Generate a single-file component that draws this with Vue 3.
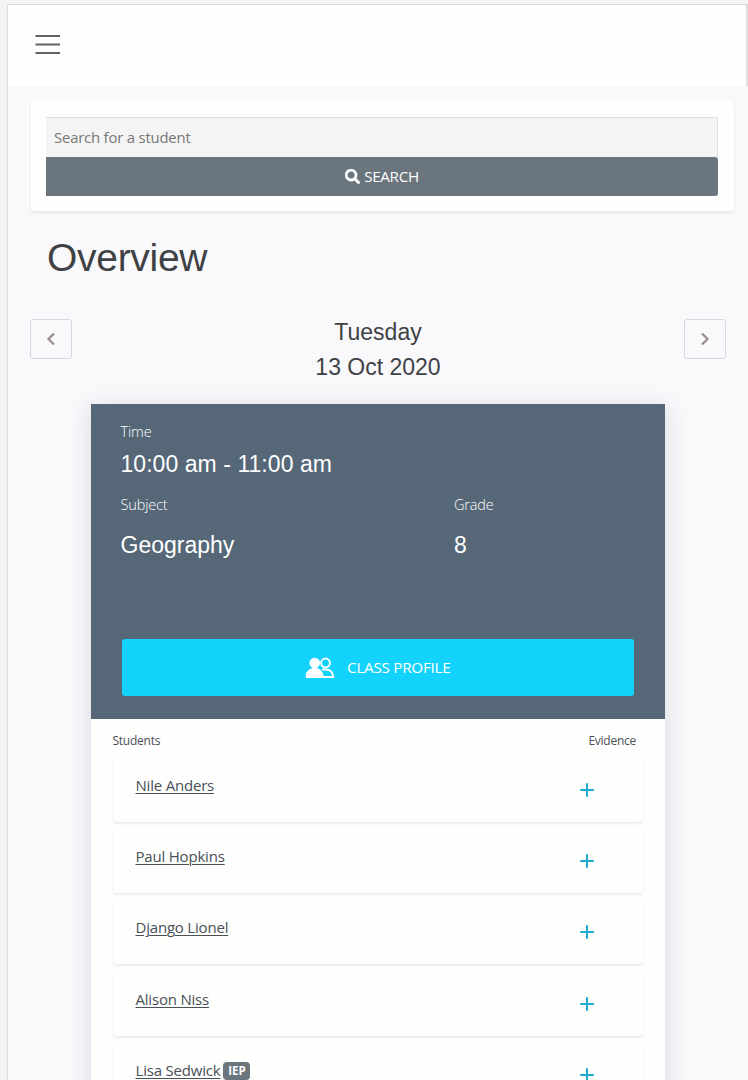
<script setup>
const students = [
  { name: 'Nile Anders' },
  { name: 'Paul Hopkins' },
  { name: 'Django Lionel' },
  { name: 'Alison Niss' },
  { name: 'Lisa Sedwick', tag: 'IEP' },
]
</script>

<template>
  <div class="page">
    <div class="shell">
      <header class="topbar">
        <svg class="menu" width="26" height="20" viewBox="0 0 26 20"><path d="M.5 1H25M.5 9.5H25M.5 18H25" stroke="#5f6468" stroke-width="2" /></svg>
        <i class="thumb"></i>
      </header>
      <main>
        <section class="search">
          <div class="field">Search for a student</div>
          <div class="go">
            <svg width="15" height="15" viewBox="0 0 512 512"><path fill="#fff" stroke="#fff" stroke-width="16" d="M505 442.700L405.300 343c-4.500-4.500-10.600-7-17-7H372c27.600-35.300 44-79.700 44-128C416 93.100 322.900 0 208 0S0 93.100 0 208s93.100 208 208 208c48.300 0 92.700-16.400 128-44v16.300c0 6.400 2.500 12.500 7 17l99.700 99.700c9.400 9.400 24.600 9.400 33.900 0l28.300-28.300c9.400-9.400 9.400-24.600.1-34zM208 336c-70.700 0-128-57.200-128-128 0-70.700 57.200-128 128-128 70.700 0 128 57.200 128 128 0 70.700-57.200 128-128 128z" /></svg>
            <span>SEARCH</span>
          </div>
        </section>
        <h1>Overview</h1>
        <div class="daybar">
          <div class="nav"><svg width="10" height="14" viewBox="0 0 10 14"><path d="M8 1.500L2.500 7L8 12.500" /></svg></div>
          <div class="date"><div>Tuesday</div><div>13 Oct 2020</div></div>
          <div class="nav next"><svg width="10" height="14" viewBox="0 0 10 14"><path d="M2 1.500L7.500 7L2 12.500" /></svg></div>
        </div>
        <section class="lesson">
          <div class="info">
            <div class="label">Time</div>
            <div class="value time">10:00 am - 11:00 am</div>
            <div class="cols">
              <div class="subject"><div class="label">Subject</div><div class="value">Geography</div></div>
              <div><div class="label">Grade</div><div class="value">8</div></div>
            </div>
            <div class="profile">
              <svg width="30" height="22" viewBox="0 0 30 22">
                <circle cx="20.500" cy="6" r="4.400" fill="none" stroke="#fff" stroke-width="2" />
                <path d="M17 12.500H21C25 12.500 28 15.500 28.200 20H16" fill="none" stroke="#fff" stroke-width="2" />
                <circle cx="9.700" cy="6" r="5.300" fill="#fff" />
                <path d="M.8 21V18.500C.8 14.500 4 12 7.500 11H12C15.500 12 18 14.500 18.500 18.500V21Z" fill="#fff" />
              </svg>
              <span>CLASS PROFILE</span>
            </div>
          </div>
          <div class="heads"><span>Students</span><span>Evidence</span></div>
          <div v-for="s in students" :key="s.name" class="row">
            <a class="name">{{ s.name }}</a>
            <span v-if="s.tag" class="tag">{{ s.tag }}</span>
            <svg class="plus" width="14" height="14" viewBox="0 0 14 14"><path d="M7 .3V13.700M.3 7H13.700" stroke="#18abd6" stroke-width="2" /></svg>
          </div>
        </section>
      </main>
    </div>
  </div>
</template>

<style>
html, body { background: #f4f4f4; overflow: hidden; }
</style>

<style scoped>
* { box-sizing: border-box; }
.page { height: 1080px; padding: 4px 0 0 7px; overflow: hidden; background: #f4f4f4; font-family: "Open Sans", "Noto Sans", sans-serif; color: #495057; }
.shell { border-top: 1px solid #dcdcdc; border-left: 1px solid #dedede; background: #f9f9fc; height: 1076px; }
.topbar { height: 81px; background: #fefefd; padding: 30px 0 0 27px; display: flex; justify-content: space-between; }
.thumb { width: 2px; height: 81px; margin-top: -30px; background: #dfdfe1; }
.menu { display: block; }
main { display: flex; flex-direction: column; }
.search { margin: 15px 14px 0 23px; height: 110px; background: #fefefd; border-radius: 4px; padding: 16px 16px 0 15px; box-shadow: 0 2px 3px rgba(40, 60, 90, .09); }
.field { height: 40px; border: 1px solid #dfdfdf; border-left: 0; border-bottom: 0; background: #f4f4f4; color: #777; padding-left: 8px; font-size: 14.900px; letter-spacing: -.2px; line-height: 39px; }
.go { height: 39px; background: #6b757d; border-radius: 0 3px 3px 0; color: #fff; display: flex; align-items: center; justify-content: center; gap: 4px; font-size: 15.200px; }
.go span { letter-spacing: -.3px; margin-top: -1px; }
h1 { margin: 22px 0 0 39px; font: 400 39px/50px "Liberation Sans", Arial, sans-serif; letter-spacing: -.3px; color: #404144; }
.daybar { display: flex; justify-content: space-between; margin: 36px 22px 0; }
.nav { width: 42px; height: 40px; border: 1px solid #d6d9dd; border-radius: 3px; display: flex; align-items: center; justify-content: center; }
.nav path { fill: none; stroke: #9b8c8b; stroke-width: 2.200; }
.date { text-align: center; font: 23px/35px "Liberation Sans", Arial, sans-serif; color: #404144; height: 84px; margin-top: -4px; }
.lesson { margin: 5px 83px 0 82.500px; width: 574.500px; height: 800px; background: #fefefd; box-shadow: 0 4px 22px rgba(40, 60, 70, .17); }
.info { height: 315px; background: #566777; color: #fff; padding: 17px 31px 0 30px; }
.label { font-size: 14.500px; line-height: 22px; font-weight: 300; letter-spacing: -.15px; }
.value { font: 23px/30px "Liberation Sans", Arial, sans-serif; }
.time { margin-top: 6px; letter-spacing: .05px; }
.cols { display: flex; margin-top: 15px; height: 143px; }
.cols .value { margin-top: 14px; }
.subject { width: 333.500px; }
.profile { margin-left: 1px; margin-top: 2px; height: 57px; border-radius: 3px; background: #13d3fd; display: flex; align-items: center; justify-content: center; gap: 12px; font-size: 15.300px; }
.profile svg { margin-top: 1px; }
.profile span { letter-spacing: -.3px; margin-top: -1px; }
.heads { display: flex; justify-content: space-between; padding: 11px 29px 0 22px; font-size: 12px; letter-spacing: -.25px; line-height: 21px; height: 37.700px; }
.row { margin: 0 22px 6.300px; height: 65px; border-radius: 4px; box-shadow: 0 2px 2px rgba(40, 60, 90, .08), 0 0 2px rgba(40, 60, 90, .05); padding: 0 49px 0 23px; display: flex; align-items: flex-start; }
.name { font-size: 15px; letter-spacing: -.2px; line-height: 24px; margin-top: 16px; text-decoration: underline; text-underline-offset: 2px; text-decoration-thickness: 1px; }
.tag { margin: 20.300px 0 0 3px; width: 27px; height: 18px; border-radius: 4px; background: #6b757d; color: #fff; font-size: 11.500px; line-height: 18px; font-weight: 700; text-align: center; }
.plus { margin: 26px 0 0 auto; }
</style>
